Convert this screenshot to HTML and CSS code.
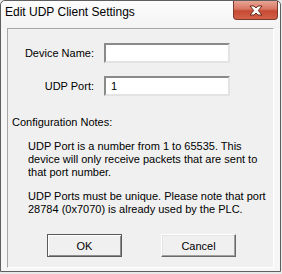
FILE: index.html
```html
<!DOCTYPE html>
<html lang="en">
<head>
  <meta charset="UTF-8" />
  <title>Edit UDP Client Settings</title>
  <link rel="stylesheet" href="styles.css">
</head>
<body>
  <div class="window">
    <div class="titlebar">
      <span class="title">Edit UDP Client Settings</span>
      <button class="close" title="Close">
        <svg width="14" height="11" viewBox="0 0 14 11">
          <path d="M1 1 H5 L7 3 L9 1 H13 L9.3 5.5 L13 10 H9 L7 8 L5 10 H1 L4.7 5.5 Z" fill="#fff" stroke="#6b2a1c" stroke-width="1" stroke-linejoin="round"/>
        </svg>
      </button>
    </div>

    <div class="frame">
      <div class="panel">
        <div class="form">
          <label for="deviceName">Device Name:</label>
          <input id="deviceName" type="text" value="">
          <label for="udpPort">UDP Port:</label>
          <input id="udpPort" type="text" value="1">
        </div>

        <div class="notes-title">Configuration Notes:</div>
        <p class="note">UDP Port is a number from 1 to 65535. This device will only receive packets that are sent to that port number.</p>
        <p class="note">UDP Ports must be unique. Please note that port 28784 (0x7070) is already used by the PLC.</p>

        <div class="buttons">
          <button class="btn default">OK</button>
          <button class="btn">Cancel</button>
        </div>
      </div>
    </div>
  </div>
</body>
</html>
```

FILE: styles.css
```css
body {
  margin: 0;
  background: #e9e9e9;
  font-family: "Liberation Sans", Arial, sans-serif;
  font-size: 11px;
  color: #000;
}

.window {
  width: 281px;
  height: 272px;
  box-sizing: border-box;
  border: 1px solid #5f5f5f;
  border-radius: 5px 5px 0 0;
  background: #f6f6f6;
  display: flex;
  flex-direction: column;
}

.titlebar {
  height: 27px;
  display: flex;
  align-items: flex-start;
  background: linear-gradient(#fdfdfd, #f3f3f3);
  border-radius: 5px 5px 0 0;
}

.title {
  font-size: 12px;
  padding: 4px 0 0 4px;
  color: #000;
}

.close {
  margin-left: auto;
  margin-right: 2px;
  width: 45px;
  height: 19px;
  padding: 0;
  border: 1px solid #7a3a2c;
  border-top: none;
  border-radius: 0 0 4px 4px;
  background: linear-gradient(#e9a595 0%, #d87562 45%, #c74a33 55%, #d26049 100%);
  display: flex;
  align-items: center;
  justify-content: center;
}

.frame {
  flex: 1;
  padding: 0 6px 3px 6px;
  display: flex;
}

.panel {
  flex: 1;
  background: #f0f0f0;
  border: 1px solid;
  border-color: #a6a6a6 #ffffff #ffffff #a6a6a6;
  padding: 14px 0 0 0;
  display: flex;
  flex-direction: column;
}

.form {
  display: grid;
  grid-template-columns: 86px 126px;
  column-gap: 10px;
  row-gap: 13px;
  align-items: center;
}

.form label {
  text-align: right;
}

.form input {
  height: 20px;
  box-sizing: border-box;
  margin: 0;
  padding: 0 0 0 5px;
  font-family: inherit;
  font-size: 11px;
  background: #fff;
  border: 2px solid;
  border-color: #8a8a8a #e3e3e3 #e3e3e3 #8a8a8a;
  outline: none;
}

.notes-title {
  margin: 20px 0 0 4px;
  line-height: 13px;
}

.note {
  margin: 11px 0 0 20px;
  width: 240px;
  line-height: 13px;
}

.buttons {
  display: flex;
  justify-content: center;
  gap: 39px;
  margin-top: 18px;
  padding-left: 2px;
}

.btn {
  width: 75px;
  height: 23px;
  font-family: inherit;
  font-size: 11px;
  background: #f0f0f0;
  border: 1px solid;
  border-color: #ffffff #696969 #696969 #ffffff;
  box-shadow: inset -1px -1px 0 #a0a0a0, inset 1px 1px 0 #e3e3e3;
  padding: 0;
}

.btn.default {
  border-color: #5a5a5a;
  box-shadow: inset 1px 1px 0 #fff, inset -1px -1px 0 #8c8c8c;
}
```
